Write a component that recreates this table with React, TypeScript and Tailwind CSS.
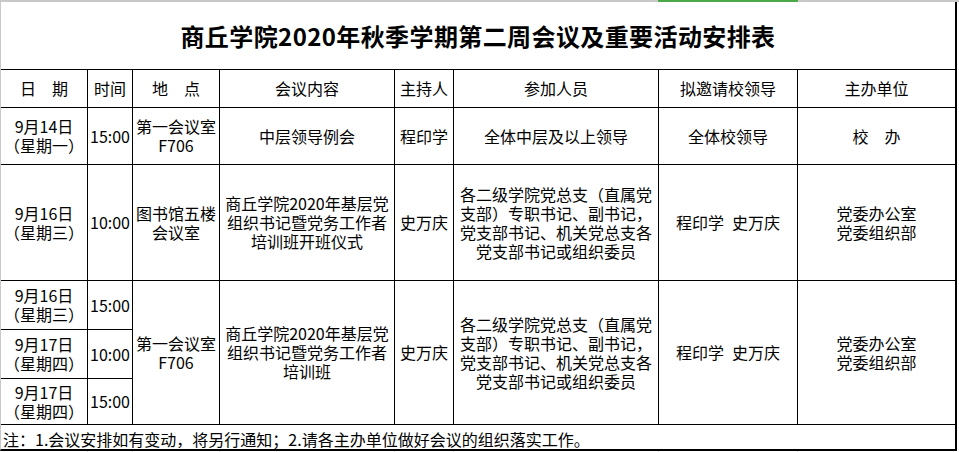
import * as React from "react";

const cell = "flex items-center justify-center bg-white text-center leading-[19px]";

function Lines({ lines }: { lines: string[] }) {
  return (
    <div>
      {lines.map((l, i) => (
        <div key={i}>{l}</div>
      ))}
    </div>
  );
}

const attendees = [
  "各二级学院党总支（直属党",
  "支部）专职书记、副书记，",
  "党支部书记、机关党总支各",
  "党支部书记或组织委员",
];

export default function App() {
  return (
    <div className="h-[452px] w-[959px] overflow-hidden bg-white text-[16px] text-black [font-family:'Noto_Sans_CJK_SC',sans-serif]">
      {/* sheet top edge with selected column marker */}
      <div className="flex h-[2px]">
        <div className="w-[658px] bg-[#c8c8c8]" />
        <div className="w-[140px] bg-[#4aa84a]" />
        <div className="flex-1 bg-[#c8c8c8]" />
      </div>

      <div className="grid w-fit grid-cols-[86px_44px_86px_174px_58px_204px_138px_157px] grid-rows-[67px_37px_56px_115px_48px_48px_45px_24px] gap-px border-b-2 border-l border-r-2 border-b-black border-l-[#c8c8c8] border-r-black bg-black">
        {/* title */}
        <div className="col-span-8 flex items-center justify-center bg-white pt-[1px] text-[24px] font-bold tracking-[0.4px]">
          商丘学院2020年秋季学期第二周会议及重要活动安排表
        </div>

        {/* header */}
        <div className={cell}>日　期</div>
        <div className={cell}>时间</div>
        <div className={cell}>地　点</div>
        <div className={cell}>会议内容</div>
        <div className={cell}>主持人</div>
        <div className={cell}>参加人员</div>
        <div className={cell}>拟邀请校领导</div>
        <div className={cell}>主办单位</div>

        {/* 9月14日 */}
        <div className={cell}><Lines lines={["9月14日", "（星期一）"]} /></div>
        <div className={cell}>15:00</div>
        <div className={cell}><Lines lines={["第一会议室", "F706"]} /></div>
        <div className={cell}>中层领导例会</div>
        <div className={cell}>程印学</div>
        <div className={cell}>全体中层及以上领导</div>
        <div className={cell}>全体校领导</div>
        <div className={cell}>校　办</div>

        {/* 9月16日 opening */}
        <div className={cell}><Lines lines={["9月16日", "（星期三）"]} /></div>
        <div className={cell}>10:00</div>
        <div className={cell}><Lines lines={["图书馆五楼", "会议室"]} /></div>
        <div className={cell}><Lines lines={["商丘学院2020年基层党", "组织书记暨党务工作者", "培训班开班仪式"]} /></div>
        <div className={cell}>史万庆</div>
        <div className={cell}><Lines lines={attendees} /></div>
        <div className={cell}>程印学{"\u2002"}史万庆</div>
        <div className={cell}><Lines lines={["党委办公室", "党委组织部"]} /></div>

        {/* training sessions */}
        <div className={cell}><Lines lines={["9月16日", "（星期三）"]} /></div>
        <div className={cell}>15:00</div>
        <div className={`${cell} row-span-3`}><Lines lines={["第一会议室", "F706"]} /></div>
        <div className={`${cell} row-span-3`}><Lines lines={["商丘学院2020年基层党", "组织书记暨党务工作者", "培训班"]} /></div>
        <div className={`${cell} row-span-3`}>史万庆</div>
        <div className={`${cell} row-span-3`}><Lines lines={attendees} /></div>
        <div className={`${cell} row-span-3`}>程印学{"\u2002"}史万庆</div>
        <div className={`${cell} row-span-3`}><Lines lines={["党委办公室", "党委组织部"]} /></div>

        <div className={cell}><Lines lines={["9月17日", "（星期四）"]} /></div>
        <div className={cell}>10:00</div>

        <div className={cell}><Lines lines={["9月17日", "（星期四）"]} /></div>
        <div className={cell}>15:00</div>

        {/* note */}
        <div className="col-span-8 flex items-end bg-white pl-[2px] leading-[19px]">
          注：1.会议安排如有变动，将另行通知；2.请各主办单位做好会议的组织落实工作。
        </div>
      </div>

      {/* gridlines below the sheet */}
      <div className="ml-[1px] grid h-[3px] w-fit grid-cols-[86px_44px_86px_174px_58px_204px_138px_157px] gap-x-px bg-[#d9d9d9]">
        {Array.from({ length: 8 }).map((_, i) => (
          <div key={i} className="bg-white" />
        ))}
      </div>
    </div>
  );
}
